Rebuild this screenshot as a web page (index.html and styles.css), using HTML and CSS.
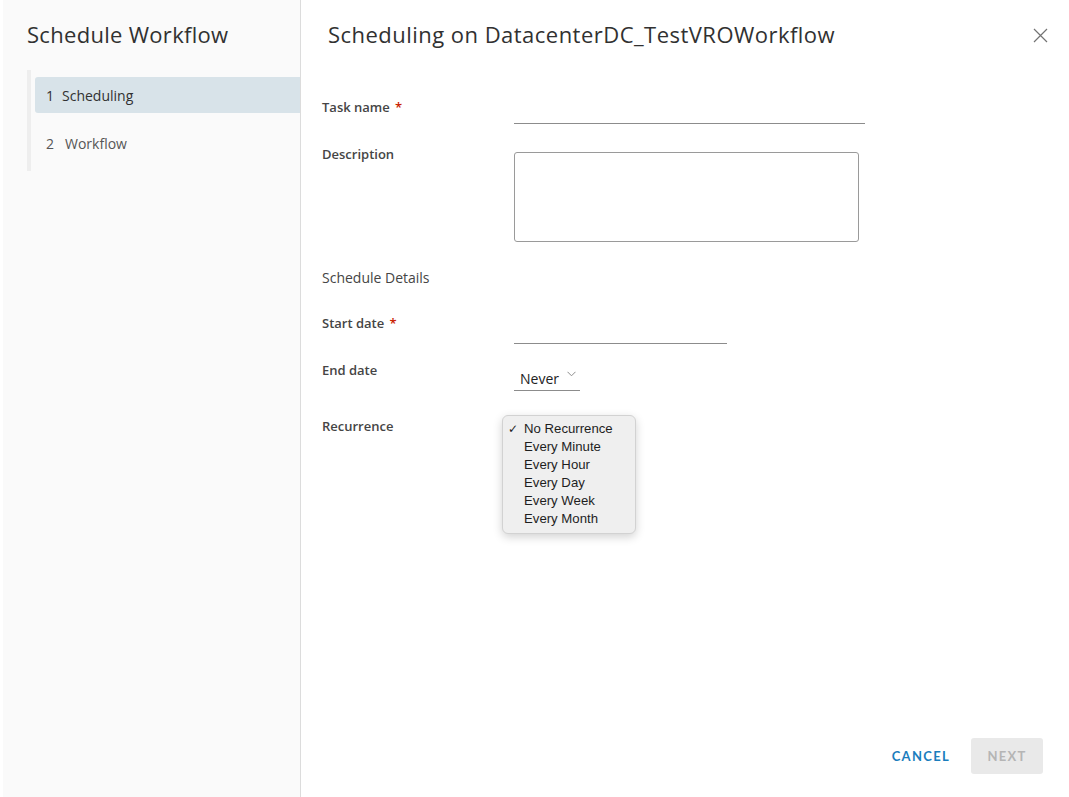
FILE: index.html
```html
<!DOCTYPE html>
<html>
<head>
<meta charset="utf-8">
<link rel="stylesheet" href="styles.css">
</head>
<body>
<div class="modal">
  <aside class="side">
    <h2 class="side-title">Schedule Workflow</h2>
    <div class="steps">
      <div class="step active"><span class="num">1</span>Scheduling</div>
      <div class="step"><span class="num">2</span>Workflow</div>
    </div>
  </aside>
  <main class="main">
    <header class="head">
      <h1 class="title">Scheduling on DatacenterDC_TestVROWorkflow</h1>
      <svg class="close" width="15" height="15" viewBox="0 0 15 15"><path d="M1 1L14 14M14 1L1 14" stroke="#737373" stroke-width="1.2" fill="none"/></svg>
    </header>
    <div class="form">
      <div class="row r-task">
        <label class="lbl">Task name <span class="req">*</span></label>
        <div class="field"><div class="line w-task"></div></div>
      </div>
      <div class="row r-desc">
        <label class="lbl">Description</label>
        <div class="field"><div class="textarea"></div></div>
      </div>
      <div class="section">Schedule Details</div>
      <div class="row r-start">
        <label class="lbl">Start date <span class="req">*</span></label>
        <div class="field"><div class="line w-start"></div></div>
      </div>
      <div class="row r-end">
        <label class="lbl">End date</label>
        <div class="field">
          <div class="select"><span>Never</span>
            <svg width="9" height="6" viewBox="0 0 9 6"><path d="M0.5 0.8L4.5 4.8L8.5 0.8" stroke="#8c8c8c" stroke-width="1" fill="none"/></svg>
          </div>
        </div>
      </div>
      <div class="row r-rec">
        <label class="lbl">Recurrence</label>
        <div class="field">
          <ul class="menu">
            <li><span class="chk">✓</span>No Recurrence</li>
            <li>Every Minute</li>
            <li>Every Hour</li>
            <li>Every Day</li>
            <li>Every Week</li>
            <li>Every Month</li>
          </ul>
        </div>
      </div>
    </div>
    <footer class="foot">
      <button class="btn cancel">CANCEL</button>
      <button class="btn next">NEXT</button>
    </footer>
  </main>
</div>
</body>
</html>
```
FILE: styles.css
```css
* { box-sizing: border-box; }
html, body { margin: 0; padding: 0; background: #fff; }
body { font-family: "Open Sans", "Lato", sans-serif; color: #333; }
.modal { display: flex; width: 1069px; height: 797px; padding-left: 3px; }
.side { width: 298px; background: #fafafa; border-right: 1px solid #dcdcdc; padding: 19px 0 0 24px; flex-shrink: 0; }
.side-title { margin: 0; font-size: 22px; font-weight: 400; color: #313131; line-height: 30px; letter-spacing: 0.3px; }
.steps { margin-top: 21px; border-left: 4px solid #eeeeee; padding: 7px 0 10px 4px; }
.step { height: 36px; display: flex; align-items: center; padding-left: 11px; font-size: 14px; color: #565656; border-radius: 3px 0 0 3px; }
.step + .step { margin-top: 12px; }
.step.active { background: #d8e3e9; color: #313131; font-weight: 500; }
.num { display: inline-block; width: 16px; }
.step + .step .num { width: 19px; }
.main { flex: 1; display: flex; flex-direction: column; padding: 0 26px 23px 21px; }
.head { display: flex; justify-content: space-between; align-items: flex-start; padding-top: 19px; padding-left: 6px; }
.title { margin: 0; font-size: 22px; font-weight: 400; color: #313131; line-height: 30px; letter-spacing: 0.47px; }
.close { margin-top: 9px; margin-right: -5px; }
.form { flex: 1; padding-top: 49px; }
.row { display: flex; }
.lbl { width: 192px; font-size: 13px; font-weight: 600; color: #454545; line-height: 18px; }
.req { color: #c92100; margin-left: 2px; }
.field { flex: 1; }
.line { border-bottom: 1px solid #8c8c8c; }
.r-task .line { height: 26px; }
.w-task { width: 351px; }
.w-start { width: 213px; }
.r-desc { margin-top: 21px; }
.textarea { width: 345px; height: 90px; border: 1px solid #9a9a9a; border-radius: 3px; margin-top: 7px; }
.section { margin-top: 27px; font-size: 14px; color: #454545; line-height: 18px; }
.r-start { margin-top: 27px; }
.r-start .line { height: 30px; }
.r-end { margin-top: 17px; }
.select { width: 66px; border-bottom: 1px solid #8c8c8c; height: 30px; display: flex; align-items: flex-end; padding: 0 0 2px 6px; font-size: 14px; color: #222; }
.select svg { margin-left: 8px; margin-bottom: 11px; }
.r-rec { margin-top: 26px; }
.menu { list-style: none; margin: -2px 0 0 -12px; padding: 4px 0 5px 0; width: 134px; background: #efefef; border: 1px solid #d2d2d2; border-radius: 6px; box-shadow: 0 3px 10px rgba(0,0,0,0.18); font-family: "Liberation Sans", "Helvetica", sans-serif; font-size: 13.2px; color: #1e1e1e; }
.menu li { position: relative; height: 18px; line-height: 18px; padding-left: 21px; }
.chk { position: absolute; left: 5px; top: 0; font-size: 12px; font-family: "DejaVu Sans", sans-serif; }
.foot { display: flex; justify-content: flex-end; align-items: center; gap: 20px; }
.btn { font-family: "Lato", sans-serif; font-size: 13px; font-weight: 700; letter-spacing: 1.3px; border: none; border-radius: 3px; height: 36px; cursor: pointer; }
.cancel { background: none; color: #1a7dbd; padding: 0; margin-right: 1px; }
.next { background: #e9e9e9; color: #b5b5b5; width: 72px; padding: 0; }
```
